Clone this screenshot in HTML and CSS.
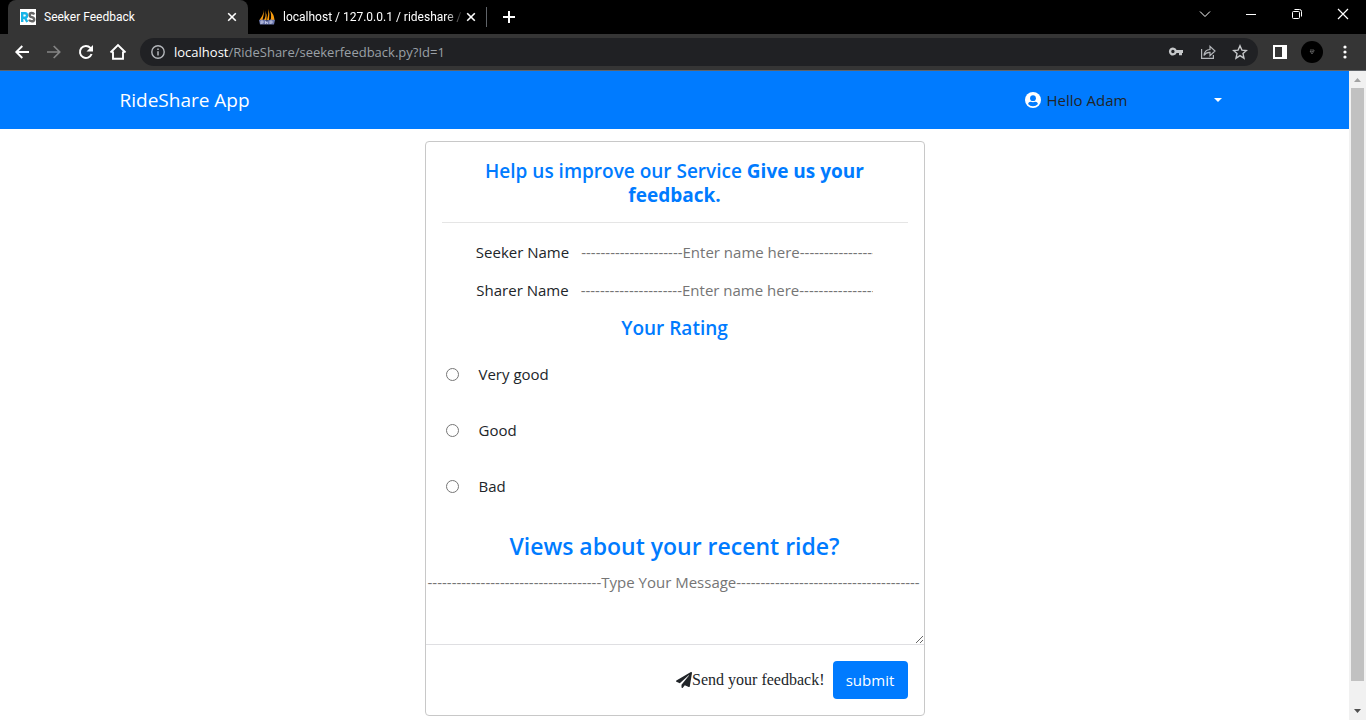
FILE: index.html
```
<!DOCTYPE html>
<html lang="en">
<head>
<meta charset="utf-8">
<meta name="viewport" content="width=device-width, initial-scale=1">
<title>Seeker Feedback</title>
<link rel="stylesheet" href="styles.css">
</head>
<body>
<header class="browser">
  <div class="tabstrip">
    <div class="tab tab-active">
      <svg class="favicon" viewBox="0 0 16 16" aria-hidden="true"><rect width="16" height="16" fill="#fff"/><g fill="none" stroke-width="2.4"><path stroke="#16b4e8" d="M2.2 13V4.2H5q2 0 2 2.2T5 8.700H2.500M4.800 8.700 7.300 13"/><path stroke="#666" d="M14.200 5.600Q13.500 4 11.700 4 9.600 4 9.600 6q0 1.700 2.200 2.200 2.400.5 2.400 2.200 0 1.900-2.400 1.900-2 0-2.700-1.700"/></g></svg>
      <span class="tab-title">Seeker Feedback</span>
      <button class="icon-btn tab-close" aria-label="Close tab"><svg width="10" height="10" viewBox="0 0 10 10"><path d="M1.200 1.200 8.800 8.800M8.800 1.200 1.200 8.800" stroke="#fff" stroke-width="1.600"/></svg></button>
    </div>
    <div class="tab tab-other">
      <svg class="favicon" viewBox="0 0 16 16" aria-hidden="true"><path fill="#f89c0e" d="M5 0.500Q4.500 6 0.500 11h3Q5 6 5 .5ZM6.200 1.500Q7.500 7 5 11h2.500Q8.500 6 6.200 1.500ZM9.500 0q0 6-1.500 11h2Q11 5 9.500 0ZM11 1.500q2 5 .5 9.500H15.500Q15 5 11 1.500Z"/><path d="M0 11l4-.5 4 1 4-1 4 .5-1 4.500H1Z" fill="#6c78af"/><path d="M2 15v-3h2V14H2M6.500 12v3M6.500 13.500h2V15M11 15v-3h2V14h-2" fill="none" stroke="#d5d9ec" stroke-width=".7"/></svg>
      <span class="tab-title tab-fade">localhost / 127.0.0.1 / rideshare /</span>
      <button class="icon-btn tab-close" aria-label="Close tab"><svg width="10" height="10" viewBox="0 0 10 10"><path d="M1.200 1.200 8.800 8.800M8.800 1.200 1.200 8.800" stroke="#fff" stroke-width="1.600"/></svg></button>
    </div>
    <button class="icon-btn new-tab" aria-label="New tab"><svg width="12" height="12" viewBox="0 0 12 12"><path d="M6 0v12M0 6h12" stroke="#fff" stroke-width="2"/></svg></button>
    <div class="window-controls">
      <button class="icon-btn" aria-label="Search tabs"><svg width="12" height="12" viewBox="0 0 12 12"><path d="m1 3.500 5 5 5-5" fill="none" stroke="#fff"/></svg></button>
      <button class="icon-btn" aria-label="Minimize"><svg width="12" height="12" viewBox="0 0 12 12"><path d="M1 6.500h10" stroke="#fff"/></svg></button>
      <button class="icon-btn" aria-label="Restore"><svg width="12" height="12" viewBox="0 0 12 12"><g fill="none" stroke="#fff"><rect x="1.500" y="3.500" width="7" height="7" rx="1"/><path d="M3.500 1.500h5a2 2 0 0 1 2 2v5"/></g></svg></button>
      <button class="icon-btn" aria-label="Close"><svg width="12" height="12" viewBox="0 0 12 12"><path d="m1 1 10 10M11 1 1 11" stroke="#fff" stroke-width="1.200"/></svg></button>
    </div>
  </div>
  <div class="toolbar">
    <div class="nav-buttons">
      <button class="icon-btn" aria-label="Back"><svg width="16" height="16" viewBox="0 0 16 16"><path d="M15 8H2.500M8.300 2 2.300 8l6 6" fill="none" stroke="#fff" stroke-width="1.900"/></svg></button>
      <button class="icon-btn" aria-label="Forward"><svg width="16" height="16" viewBox="0 0 16 16"><path d="M1 8h12.500M7.700 2l6 6-6 6" fill="none" stroke="#858585" stroke-width="1.700"/></svg></button>
      <button class="icon-btn" aria-label="Reload"><svg width="16" height="16" viewBox="0 0 16 16"><path d="M13.600 10A6 6 0 1 1 12.400 3.900L14 5.500" fill="none" stroke="#fff" stroke-width="2"/><path d="M15 1v6.500H8.500Z" fill="#fff"/></svg></button>
      <button class="icon-btn" aria-label="Home"><svg width="18" height="18" viewBox="0 0 18 18"><path d="M1.500 9.500 9 2l7.500 7.500M4 8.500v7.300h10V8.500" fill="none" stroke="#fff" stroke-width="1.900"/></svg></button>
    </div>
    <div class="address">
      <svg class="info" width="14" height="14" viewBox="0 0 14 14" aria-hidden="true"><circle cx="7" cy="7" r="6.200" fill="none" stroke="#b4b7bb" stroke-width="1.400"/><path d="M7 6.200v4.300M7 3.500v1.500" stroke="#b4b7bb" stroke-width="1.500"/></svg>
      <span class="url"><span class="host">localhost</span>/RideShare/seekerfeedback.py?Id=1</span>
      <button class="icon-btn" aria-label="Passwords"><svg width="16" height="16" viewBox="0 0 16 16"><path fill="#c6c8ca" fill-rule="evenodd" d="M8.600 6A4 4 0 1 0 8.600 9H11v2.300h3V9h1V6ZM4.900 5.800a1.700 1.700 0 1 1 0 3.400 1.700 1.700 0 0 1 0-3.400Z"/></svg></button>
      <button class="icon-btn" aria-label="Share"><svg width="16" height="16" viewBox="0 0 16 16"><g fill="none" stroke="#b4b7bb" stroke-width="1.200"><path d="M1.600 5v9.400h11.800V11"/><path d="M4 11.500Q4.500 5.800 10 5.500V2.300L15 7l-5 4.600V8.400Q6 8.200 4 11.500Z"/></g></svg></button>
      <button class="icon-btn" aria-label="Bookmark this page"><svg width="16" height="16" viewBox="0 0 16 16"><path d="m8 1.800 1.900 4.300 4.600.4L11 9.600l1 4.600-4-2.500-4 2.500 1-4.600-3.500-3.100 4.600-.4Z" fill="none" stroke="#c6c8ca" stroke-width="1.400"/></svg></button>
    </div>
    <button class="icon-btn side-panel" aria-label="Side panel"><svg width="14" height="14" viewBox="0 0 14 14"><path d="M0 0h14v14H0ZM2 2v10h7V2Z" fill="#fff" fill-rule="evenodd"/></svg></button>
    <button class="icon-btn avatar" aria-label="Profile"><svg width="22" height="22" viewBox="0 0 22 22"><path d="M9 9h4v1l-2 3-2-3 2 1 1-1" fill="none" stroke="#777" stroke-width=".7"/></svg></button>
    <button class="icon-btn menu" aria-label="Menu"><svg width="4" height="14" viewBox="0 0 4 14"><g fill="#fff"><circle cx="2" cy="2" r="1.600"/><circle cx="2" cy="7" r="1.600"/><circle cx="2" cy="12" r="1.600"/></g></svg></button>
  </div>
</header>
<div class="viewport">
  <div class="page">
    <nav class="navbar">
      <div class="container">
        <a class="brand" href="#">RideShare App</a>
        <a class="user" href="#">
          <svg width="16" height="16" viewBox="0 0 16 16" aria-hidden="true"><circle cx="8" cy="8" r="8" fill="#fff"/><circle cx="8" cy="6.200" r="2.900" fill="#007bff"/><path d="M3 12q.5-2.300 2.800-2.300 2.200.9 4.400 0Q12.500 9.700 13 12 11 14.200 8 14.200T3 12Z" fill="#007bff"/></svg>
          <span>Hello Adam</span>
          <svg class="caret" width="8" height="4" viewBox="0 0 8 4" aria-hidden="true"><path d="M0 0h8L4 4Z" fill="#fff"/></svg>
        </a>
      </div>
    </nav>
    <main>
      <form class="card">
        <div class="card-body">
          <h1 class="title">Help us improve our Service <strong>Give us your feedback.</strong></h1>
          <div class="field"><label for="seeker">Seeker Name</label><input class="name-input" id="seeker" type="text" placeholder="---------------------Enter name here--------------------"></div>
          <div class="field"><label for="sharer">Sharer Name</label><input class="name-input" id="sharer" type="text" placeholder="---------------------Enter name here--------------------"></div>
          <fieldset class="ratings">
            <legend class="subtitle">Your Rating</legend>
            <div class="rating"><input type="radio" name="rating" id="very-good"><label for="very-good">Very good</label></div>
            <div class="rating"><input type="radio" name="rating" id="good"><label for="good">Good</label></div>
            <div class="rating"><input type="radio" name="rating" id="bad"><label for="bad">Bad</label></div>
          </fieldset>
        </div>
        <h2 class="views"><label for="message">Views about your recent ride?</label></h2>
        <textarea class="message" id="message" placeholder="------------------------------------Type Your Message--------------------------------------"></textarea>
        <div class="card-footer">
          <span class="send"><svg width="16" height="16" viewBox="0 0 512 512" aria-hidden="true"><path fill="#212529" d="M476 3 12 271c-18 10-16 35 2 43l107 45L408 105c6-5 13 3 9 8L176 407v80c0 24 28 33 42 16l64-78 125 53c14 6 31-3 33-18l72-432c3-20-19-35-36-25Z"/></svg>Send your feedback!</span>
          <button class="submit" type="submit">submit</button>
        </div>
      </form>
    </main>
  </div>
  <div class="scrollbar" aria-hidden="true">
    <svg width="17" height="17" viewBox="0 0 17 17"><path d="M5 11 8.500 7l3.500 4Z" fill="#a3a3a3"/></svg>
    <div class="thumb"></div>
    <svg width="17" height="17" viewBox="0 0 17 17"><path d="M5 6 8.500 10 12 6Z" fill="#505050"/></svg>
  </div>
</div>
</body>
</html>
```
FILE: styles.css
```
* { box-sizing: border-box; }

body {
  margin: 0;
  height: 100vh;
  display: flex;
  flex-direction: column;
  overflow: hidden;
  background: #fff;
  color: #212529;
  font: 15px/24px "Open Sans", "Noto Sans", sans-serif;
}

svg { display: block; flex: none; }
button, input, textarea { font: inherit; }

.icon-btn {
  display: flex;
  align-items: center;
  justify-content: center;
  padding: 0;
  border: 0;
  background: none;
}

/* Browser frame */
.browser { flex: none; background: #353535; border-bottom: 1px solid #5f6368; }
.tabstrip { display: flex; height: 34px; padding-left: 8px; background: #000; }
.tab {
  display: flex;
  align-items: center;
  width: 240px;
  padding: 0 9px 0 12px;
  color: #fff;
  font: 12px/16px Roboto, sans-serif;
}
.tab-active { background: #353535; border-radius: 8px 8px 0 0; }
.tab-other {
  width: 239px;
  padding-left: 11px;
  background: linear-gradient(#5f6368, #5f6368) right center / 1px 20px no-repeat;
}
.favicon { width: 16px; height: 16px; margin-right: 8px; }
.tab-title { flex: 1; min-width: 0; overflow: hidden; white-space: nowrap; }
.tab-fade { mask-image: linear-gradient(to right, #000 90%, transparent); }
.tab-close { width: 14px; height: 16px; }
.new-tab { width: 44px; }
.window-controls { display: flex; margin-left: auto; }
.window-controls .icon-btn { width: 46px; height: 28px; }
.toolbar {
  display: flex;
  align-items: center;
  height: 36px;
  padding-right: 12px;
}
.nav-buttons { display: flex; padding: 0 6px; }
.nav-buttons .icon-btn { width: 32px; height: 28px; }
.address {
  flex: 1;
  display: flex;
  align-items: center;
  height: 28px;
  margin-right: 7px;
  padding: 0 2px 0 11px;
  border-radius: 14px;
  background: #202124;
}
.address .icon-btn { width: 32px; height: 28px; }
.url { flex: 1; margin-left: 9px; color: #9aa0a6; font-size: 13px; }
.host { color: #fff; }
.side-panel { width: 30px; margin-right: 6px; }
.avatar { width: 22px; height: 22px; border-radius: 50%; background: #000; }
.menu { width: 18px; margin-left: 13px; }

.viewport { flex: 1; min-height: 0; display: flex; }
.page { flex: 1; min-width: 0; overflow: hidden; }

/* Scroll bar */
.scrollbar { display: flex; flex-direction: column; width: 17px; background: #f1f1f1; }
.thumb { flex: 1; margin: 0 2px 22px; background: #c1c1c1; }

/* Navigation bar */
.navbar { background: #007bff; padding: 9px 0; }
.container {
  display: flex;
  align-items: center;
  justify-content: space-between;
  max-width: 1140px;
  min-height: 40px;
  margin: 0 auto;
  padding: 0 15px;
}
.brand { color: #fff; font-size: 19px; text-decoration: none; }
.user {
  display: flex;
  align-items: center;
  gap: 6px;
  width: 197px;
  margin-right: 8px;
  color: #212529;
  text-decoration: none;
}
.caret { margin-left: auto; }

/* Feedback card */
.card {
  max-width: 500px;
  margin: 12px auto;
  border: 1px solid #c8c8c8;
  border-radius: 4px;
  background: #fff;
}
.card-body { padding: 17px 16px; }
.title, .subtitle, .views {
  color: #007bff;
  font-weight: 600;
  text-align: center;
}
.title, .subtitle { font-size: 19px; line-height: 24px; }
.title { margin: 0 0 10px; padding-bottom: 15px; border-bottom: 1px solid #e5e5e5; }
.title strong { font-weight: 700; }
.field { display: flex; align-items: center; justify-content: center; height: 38px; }
.name-input {
  width: 292px;
  margin-left: 12px;
  padding: 0;
  border: 0;
  background: none;
}
.name-input::placeholder, .message::placeholder { color: #757575; opacity: 1; }
.ratings { margin: 7px 0 0; padding: 0; border: 0; }
.subtitle { width: 100%; padding: 0; margin-bottom: 6px; }
.rating { display: flex; align-items: center; height: 56px; }
.rating input { width: 13px; height: 13px; margin: 0 20px 0 4px; }
.views { margin: 1px 0 8px; font-size: 23px; line-height: 28px; }
.message {
  display: block;
  width: 100%;
  height: 76px;
  padding: 2px;
  border: 0;
  resize: both;
  overflow: hidden;
}
.card-footer {
  display: flex;
  align-items: center;
  justify-content: flex-end;
  gap: 8px;
  padding: 16px;
  border-top: 1px solid #dfdfe2;
}
.send { display: flex; align-items: center; font: 16px/24px "Liberation Serif", serif; }
.submit {
  height: 38px;
  min-width: 75px;
  padding: 0 12px;
  border: 0;
  border-radius: 4px;
  background: #007bff;
  color: #fff;
}
```
